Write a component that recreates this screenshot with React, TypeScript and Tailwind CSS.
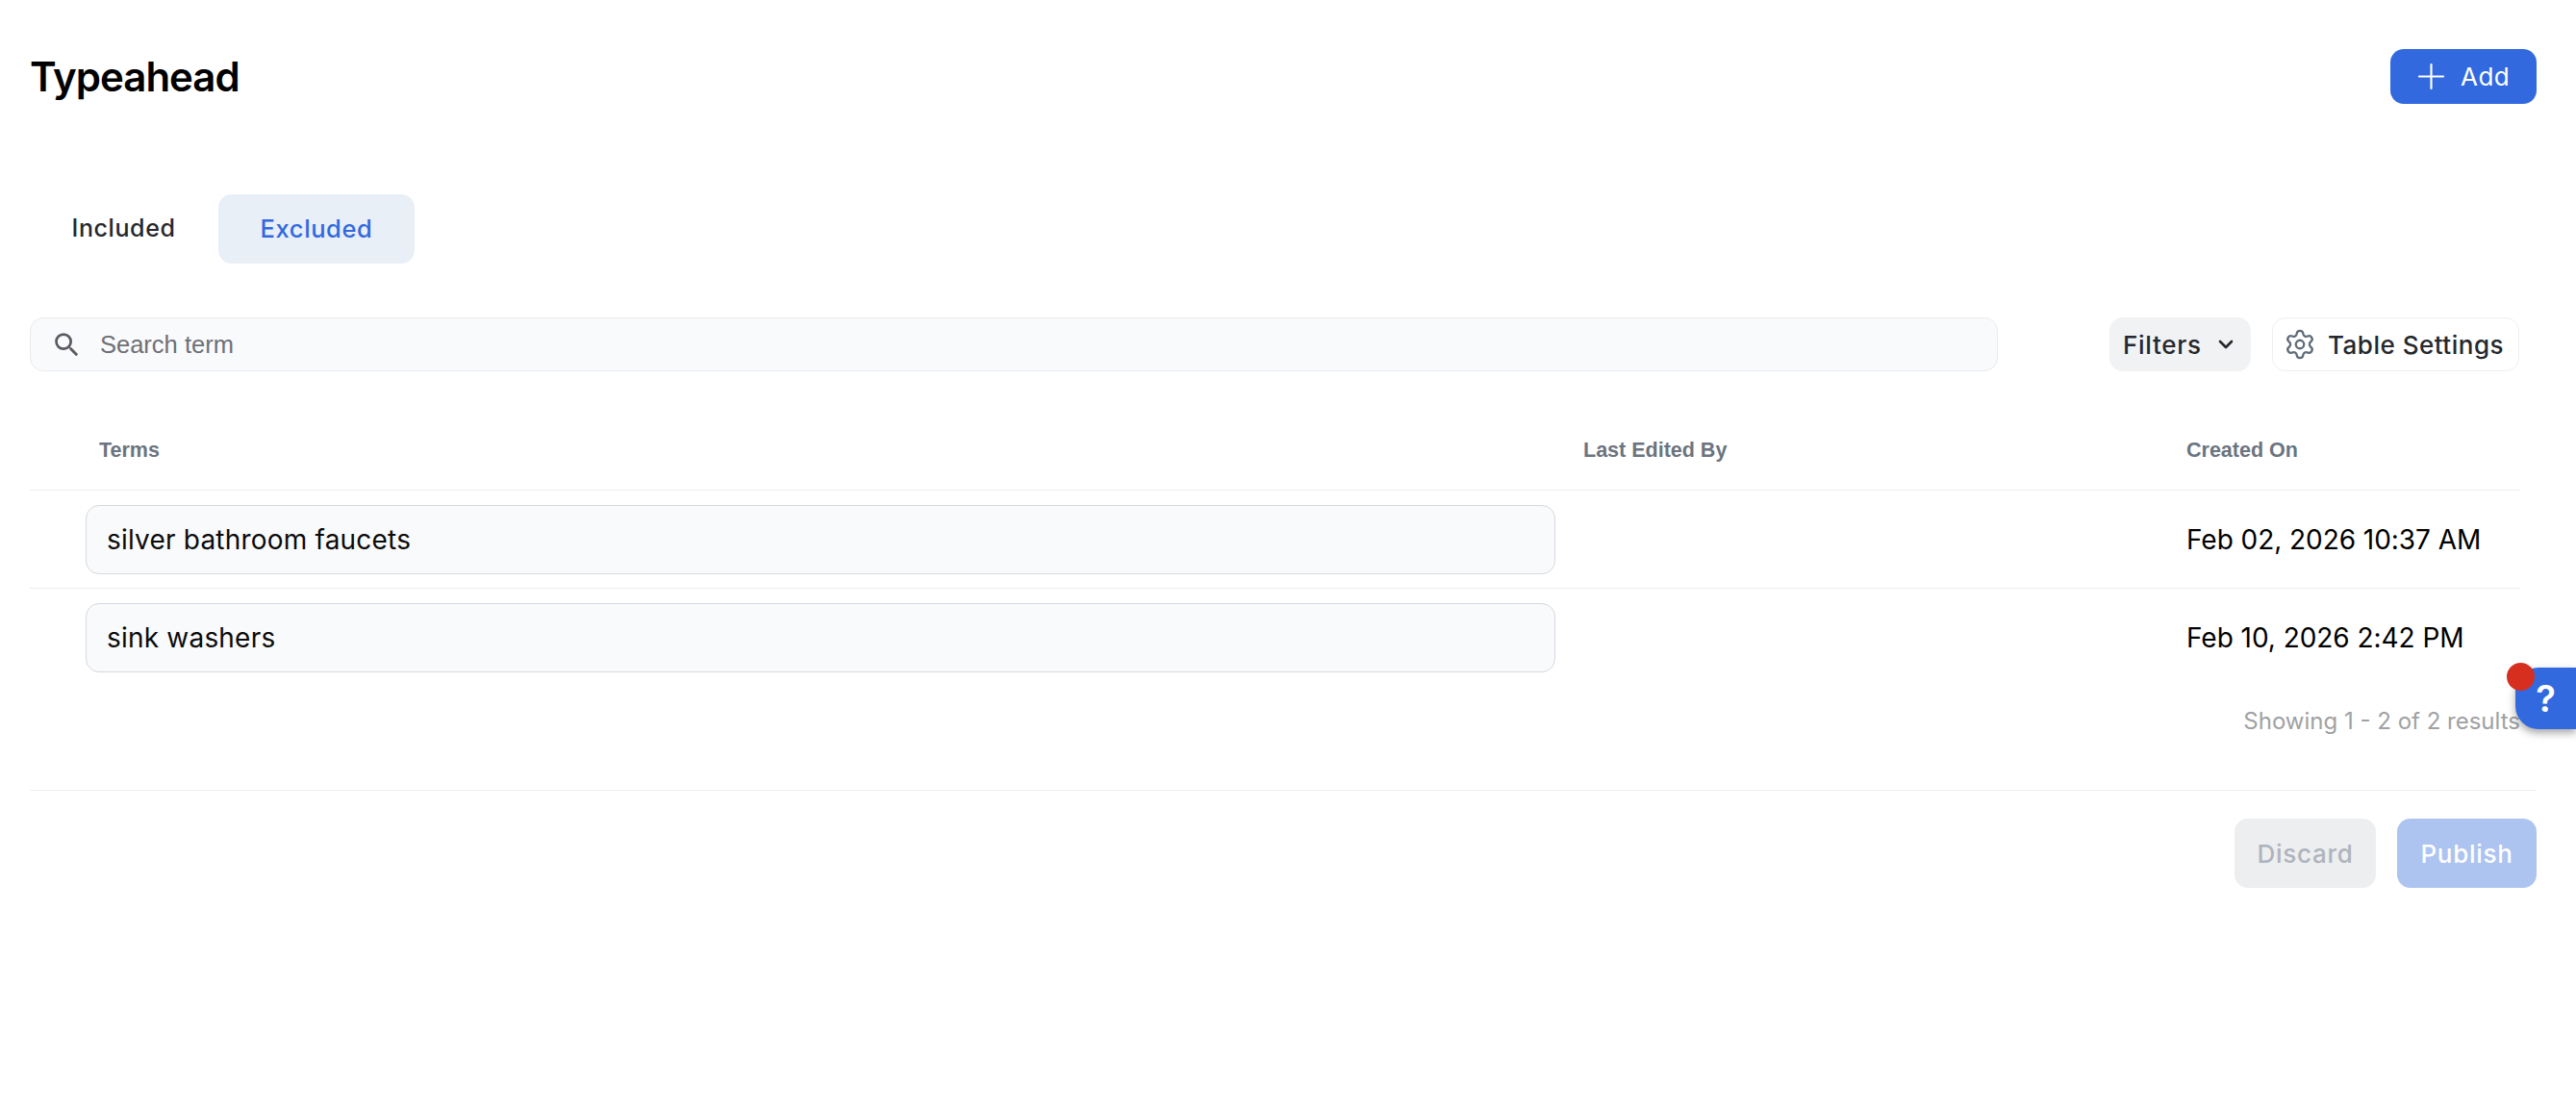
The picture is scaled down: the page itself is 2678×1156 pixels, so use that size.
import { ChevronDown, Plus, Settings } from 'lucide-react';

const rows = [
  { term: 'silver bathroom faucets', created: 'Feb 02, 2026 10:37 AM' },
  { term: 'sink washers', created: 'Feb 10, 2026 2:42 PM' },
];

function SearchIcon() {
  return (
    <svg viewBox="0 0 24 24" className="h-[33px] w-[33px] shrink-0 fill-[#5c5963]">
      <path d="M15.5 14h-.79l-.28-.27A6.471 6.471 0 0 0 16 9.5 6.5 6.5 0 1 0 9.5 16c1.61 0 3.09-.59 4.23-1.57l.27.28v.79l5 4.99L20.49 19l-4.99-5zm-6 0C7.01 14 5 11.99 5 9.5S7.01 5 9.5 5 14 7.01 14 9.5 11.99 14 9.5 14z" />
    </svg>
  );
}

function TermRow({ term, created }: { term: string; created: string }) {
  return (
    <div className="flex h-[102px] items-center border-b border-[#eceef0] last:border-b-0">
      <div className="ml-[58px] flex h-[72px] w-[1528px] items-center rounded-[14px] border border-[#d5d9de] bg-[#f9fafc] px-[21px] text-[28px] tracking-[0.2px] text-[#0b0b0b]">
        {term}
      </div>
      <div className="ml-[656px] whitespace-nowrap text-[28px] tracking-[-0.05px] text-black">{created}</div>
    </div>
  );
}

export default function App() {
  return (
    <div className="relative min-h-[1156px] bg-white pl-[31px] pr-[41px] font-['Inter',sans-serif]">
      <div className="flex items-center justify-between pt-[51px]">
        <h1 className="text-[42px] leading-[57px] font-semibold tracking-[-1px] text-black">Typeahead</h1>
        <button className="flex h-[57px] w-[152px] items-center rounded-[14px] bg-[#3269df] pl-[21px] text-[26px] tracking-[0.5px] text-white">
          <Plus className="h-[43px] w-[43px]" strokeWidth={1.2} />
          <span className="ml-[9px]">Add</span>
        </button>
      </div>

      <div className="mt-[94px] flex gap-px">
        <button className="h-[72px] w-[195px] rounded-[14px] text-[25px] font-medium tracking-[0.6px] text-[#25282d]">Included</button>
        <button className="h-[72px] w-[204px] rounded-[14px] bg-[#e8eff7] text-[25.5px] font-medium tracking-[0.6px] text-[#3269df]">Excluded</button>
      </div>

      <div className="mt-[56px] flex h-[56px] items-center pr-[17px]">
        <div className="flex h-full w-[2046px] items-center rounded-[14px] border border-[#e9ebee] bg-[#f9fafc] pl-[21px]">
          <SearchIcon />
          <span className="ml-[18px] pt-px font-['Liberation_Sans',sans-serif] text-[25.5px] text-[#6f7076]">Search term</span>
        </div>
        <button className="ml-[116px] flex h-full w-[147px] items-center rounded-[14px] bg-[#f1f2f4] pl-[14px] text-[26px] font-medium tracking-[0.7px] text-[#25282d]">
          Filters
          <ChevronDown className="ml-[13px] h-[24px] w-[24px]" strokeWidth={2.6} />
        </button>
        <button className="ml-[22px] flex h-full w-[257px] items-center rounded-[14px] border border-[#eceef0] bg-white pl-[11px] text-[26px] font-medium tracking-[0.5px] text-[#25282d]">
          <Settings className="h-[34px] w-[34px] shrink-0 text-[#5f6b78]" strokeWidth={1.6} />
          <span className="ml-[12px] whitespace-nowrap">Table Settings</span>
        </button>
      </div>

      <div className="mr-[17px] mt-[43px]">
        <div className="grid h-[81px] grid-cols-[1615px_627px_1fr] items-center border-b border-[#eceef0] pb-[2px] font-['Liberation_Sans',sans-serif] text-[21.5px] font-bold whitespace-nowrap text-[#6b7480]">
          <span className="pl-[72px]">Terms</span>
          <span>Last Edited By</span>
          <span>Created On</span>
        </div>
        {rows.map((row) => (
          <TermRow key={row.term} term={row.term} created={row.created} />
        ))}
      </div>

      <div className="mr-[17px] mt-[21px] text-right text-[24px] leading-[30px] text-[#a0a1a3]">
        Showing 1 - 2 of 2 results
      </div>

      <div className="mt-[56px] border-t border-[#eceef0] pt-[29px]">
        <div className="flex justify-end gap-[22px]">
          <button className="h-[72px] w-[147px] rounded-[14px] bg-[#edeef0] text-[26px] font-medium tracking-[0.7px] text-[#aeb4bd]">Discard</button>
          <button className="h-[72px] w-[145px] rounded-[14px] bg-[#adc3f0] text-[26px] font-medium tracking-[0.7px] text-white">Publish</button>
        </div>
      </div>

      <div className="absolute left-[2615px] top-[694px] flex h-[64px] w-[63px] items-center justify-center rounded-l-[24px] bg-[#3269df] text-[38px] font-semibold text-white shadow-[0_4px_8px_rgba(0,0,0,0.35)]">
        ?
      </div>
      <div className="absolute left-[2606px] top-[689px] h-[29px] w-[29px] rounded-full bg-[#d62f20]" />
    </div>
  );
}
